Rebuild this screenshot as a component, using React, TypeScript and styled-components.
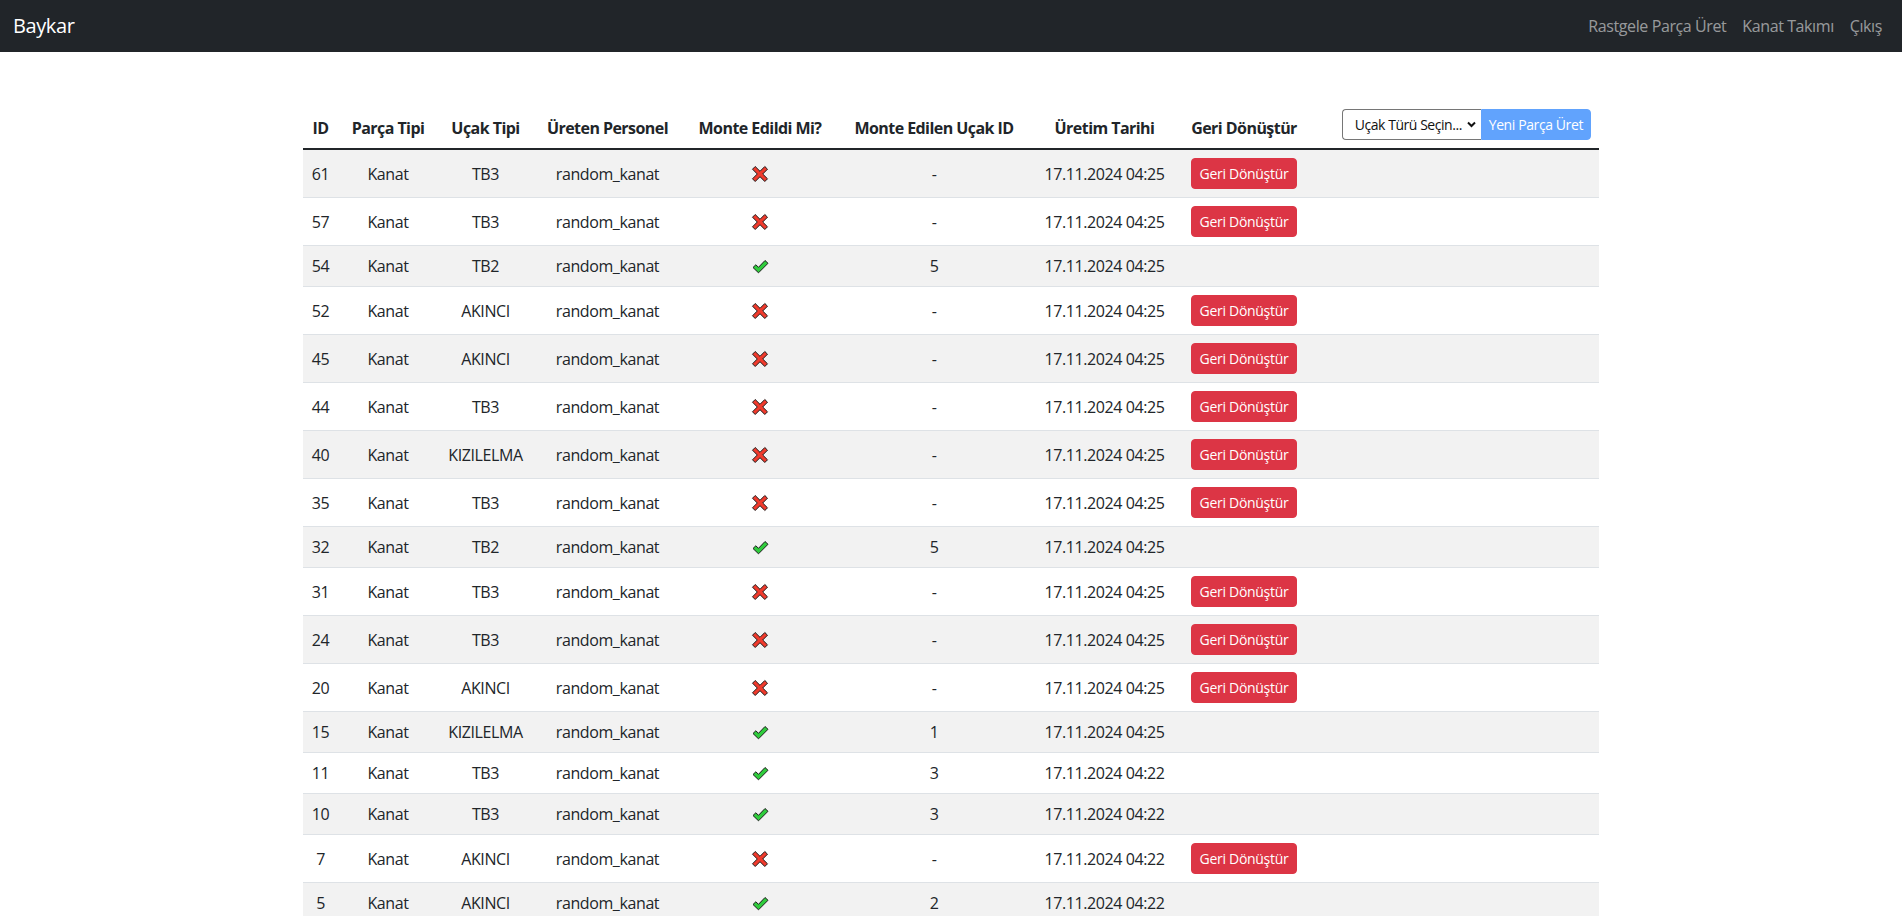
import React from "react";
import styled, { createGlobalStyle } from "styled-components";

const GlobalStyle = createGlobalStyle`
  html, body { margin: 0; padding: 0; background: #fff; }
  body {
    font-family: "Open Sans", "Noto Sans", "Liberation Sans", sans-serif;
    font-size: 16px;
    line-height: 1.5;
    color: #212529;
    letter-spacing: -0.4px;
  }
  * { box-sizing: border-box; }
`;

const NavBar = styled.nav`
  height: 52px;
  background: #212529;
  padding: 0 12px 0 13px;
  display: flex;
  align-items: center;
  justify-content: space-between;
`;

const Brand = styled.a`
  font-size: 20px;
  color: #fff;
  text-decoration: none;
  line-height: 30px;
`;

const NavLinks = styled.div`
  display: flex;
  align-items: center;
`;

const NavLink = styled.a`
  padding: 0 8px;
  color: rgba(255, 255, 255, 0.55);
  text-decoration: none;
  font-size: 16px;
  line-height: 24px;
`;

const Container = styled.main`
  width: 1296px;
  margin: 49px auto 0;
`;

const Table = styled.table`
  width: 100%;
  border-collapse: collapse;
  table-layout: fixed;
`;

const HeadCell = styled.th<{ $w?: number }>`
  width: ${(p) => (p.$w ? `${p.$w}px` : "auto")};
  padding: 8px;
  vertical-align: bottom;
  text-align: center;
  font-weight: 700;
  letter-spacing: -0.55px;
  line-height: 24px;
  border-bottom: 2px solid #212529;
  white-space: nowrap;
`;

const Row = styled.tr<{ $striped: boolean }>`
  background: ${(p) => (p.$striped ? "#f2f2f2" : "#fff")};
`;

const Cell = styled.td`
  padding: 8px;
  text-align: center;
  vertical-align: middle;
  line-height: 24px;
  border-bottom: 1px solid #dee2e6;
  white-space: nowrap;
`;

const IconWrap = styled.span`
  display: inline-flex;
  vertical-align: middle;
  margin-top: -3px;
`;

const DangerButton = styled.button`
  font-family: inherit;
  letter-spacing: -0.3px;
  font-size: 14px;
  line-height: 21px;
  padding: 4px 8px;
  color: #fff;
  background: #dc3545;
  border: 1px solid #dc3545;
  border-radius: 4px;
  cursor: pointer;
  vertical-align: middle;
`;

const Controls = styled.div`
  display: flex;
  justify-content: flex-end;
  align-items: stretch;
  height: 31px;
  letter-spacing: -0.4px;
`;

const SelectBox = styled.div`
  position: relative;
  width: 139px;
`;

const Select = styled.select`
  appearance: none;
  -webkit-appearance: none;
  width: 100%;
  height: 31px;
  font-family: inherit;
  letter-spacing: -0.45px;
  font-size: 14px;
  font-weight: 400;
  color: #111;
  padding: 0 14px 0 12px;
  border: 1px solid #767676;
  border-right: none;
  border-radius: 4px 0 0 4px;
  background: #fff;
`;

const Chevron = styled.svg`
  position: absolute;
  right: 5px;
  top: 12px;
  pointer-events: none;
`;

const PrimaryButton = styled.button`
  font-family: inherit;
  letter-spacing: -0.4px;
  font-size: 14px;
  font-weight: 400;
  line-height: 21px;
  padding: 4px 7px;
  color: #fff;
  background: #61a3fd;
  border: 1px solid #61a3fd;
  border-radius: 0 4px 4px 0;
  white-space: nowrap;
`;

const CrossIcon = () => (
  <svg width="18" height="18" viewBox="0 0 18 18">
    <polygon
      points="1.5,4.2 4.2,1.5 9,6.3 13.8,1.5 16.5,4.2 11.7,9 16.5,13.8 13.8,16.5 9,11.7 4.2,16.5 1.5,13.8 6.3,9"
      fill="#f03a2c"
      stroke="#1c1c1c"
      strokeWidth="1"
      strokeLinejoin="miter"
    />
  </svg>
);

const CheckIcon = () => (
  <svg width="17" height="15" viewBox="0 0 17 15">
    <polygon
      points="1,8.5 3.8,5.8 6.5,8.3 13,1.5 16,4.3 6.5,13.8"
      fill="#2fcc3c"
      stroke="#1c1c1c"
      strokeWidth="1"
      strokeLinejoin="miter"
    />
  </svg>
);

type Part = {
  id: number;
  plane: string;
  done: boolean;
  planeId: string;
  date: string;
};

const parts: Part[] = [
  { id: 61, plane: "TB3", done: false, planeId: "-", date: "17.11.2024 04:25" },
  { id: 57, plane: "TB3", done: false, planeId: "-", date: "17.11.2024 04:25" },
  { id: 54, plane: "TB2", done: true, planeId: "5", date: "17.11.2024 04:25" },
  { id: 52, plane: "AKINCI", done: false, planeId: "-", date: "17.11.2024 04:25" },
  { id: 45, plane: "AKINCI", done: false, planeId: "-", date: "17.11.2024 04:25" },
  { id: 44, plane: "TB3", done: false, planeId: "-", date: "17.11.2024 04:25" },
  { id: 40, plane: "KIZILELMA", done: false, planeId: "-", date: "17.11.2024 04:25" },
  { id: 35, plane: "TB3", done: false, planeId: "-", date: "17.11.2024 04:25" },
  { id: 32, plane: "TB2", done: true, planeId: "5", date: "17.11.2024 04:25" },
  { id: 31, plane: "TB3", done: false, planeId: "-", date: "17.11.2024 04:25" },
  { id: 24, plane: "TB3", done: false, planeId: "-", date: "17.11.2024 04:25" },
  { id: 20, plane: "AKINCI", done: false, planeId: "-", date: "17.11.2024 04:25" },
  { id: 15, plane: "KIZILELMA", done: true, planeId: "1", date: "17.11.2024 04:25" },
  { id: 11, plane: "TB3", done: true, planeId: "3", date: "17.11.2024 04:22" },
  { id: 10, plane: "TB3", done: true, planeId: "3", date: "17.11.2024 04:22" },
  { id: 7, plane: "AKINCI", done: false, planeId: "-", date: "17.11.2024 04:22" },
  { id: 5, plane: "AKINCI", done: true, planeId: "2", date: "17.11.2024 04:22" },
];

export default function App() {
  return (
    <>
      <GlobalStyle />
      <NavBar>
        <Brand href="#">Baykar</Brand>
        <NavLinks>
          <NavLink href="#">Rastgele Parça Üret</NavLink>
          <NavLink href="#">Kanat Takımı</NavLink>
          <NavLink href="#">Çıkış</NavLink>
        </NavLinks>
      </NavBar>
      <Container>
        <Table>
          <thead>
            <tr>
              <HeadCell $w={35}>ID</HeadCell>
              <HeadCell $w={100}>Parça Tipi</HeadCell>
              <HeadCell $w={95}>Uçak Tipi</HeadCell>
              <HeadCell $w={149}>Üreten Personel</HeadCell>
              <HeadCell $w={156}>Monte Edildi Mi?</HeadCell>
              <HeadCell $w={192}>Monte Edilen Uçak ID</HeadCell>
              <HeadCell $w={149}>Üretim Tarihi</HeadCell>
              <HeadCell $w={130}>Geri Dönüştür</HeadCell>
              <HeadCell>
                <Controls>
                  <SelectBox>
                    <Select defaultValue="">
                      <option value="">Uçak Türü Seçin...</option>
                      <option value="TB2">TB2</option>
                      <option value="TB3">TB3</option>
                      <option value="AKINCI">AKINCI</option>
                      <option value="KIZILELMA">KIZILELMA</option>
                    </Select>
                    <Chevron width="9" height="7" viewBox="0 0 9 7">
                      <path d="M1 1.5 L4.5 5 L8 1.5" fill="none" stroke="#111" strokeWidth="2" />
                    </Chevron>
                  </SelectBox>
                  <PrimaryButton disabled>Yeni Parça Üret</PrimaryButton>
                </Controls>
              </HeadCell>
            </tr>
          </thead>
          <tbody>
            {parts.map((p, i) => (
              <Row key={p.id} $striped={i % 2 === 0}>
                <Cell>{p.id}</Cell>
                <Cell>Kanat</Cell>
                <Cell>{p.plane}</Cell>
                <Cell>random_kanat</Cell>
                <Cell>
                  <IconWrap>{p.done ? <CheckIcon /> : <CrossIcon />}</IconWrap>
                </Cell>
                <Cell>{p.planeId}</Cell>
                <Cell>{p.date}</Cell>
                <Cell>{!p.done && <DangerButton>Geri Dönüştür</DangerButton>}</Cell>
                <Cell />
              </Row>
            ))}
          </tbody>
        </Table>
      </Container>
    </>
  );
}
